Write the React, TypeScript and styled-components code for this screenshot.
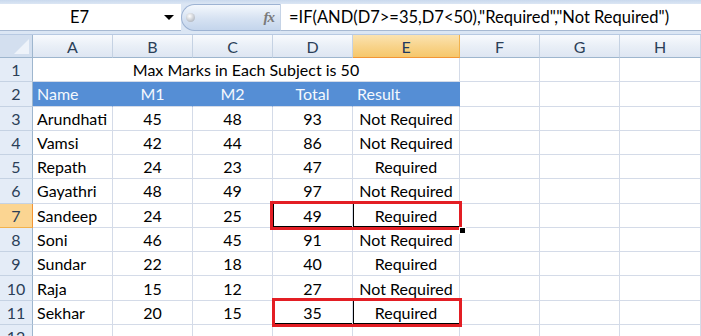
import React from "react";
import styled, { createGlobalStyle } from "styled-components";

const GlobalStyle = createGlobalStyle`
  html, body {
    margin: 0;
    padding: 0;
    background: #fff;
  }
  body {
    font-family: Lato, "Liberation Sans", sans-serif;
  }
`;

const students = [
  { name: "Arundhati", m1: 45, m2: 48 },
  { name: "Vamsi", m1: 42, m2: 44 },
  { name: "Repath", m1: 24, m2: 23 },
  { name: "Gayathri", m1: 48, m2: 49 },
  { name: "Sandeep", m1: 24, m2: 25 },
  { name: "Soni", m1: 46, m2: 45 },
  { name: "Sundar", m1: 22, m2: 18 },
  { name: "Raja", m1: 15, m2: 12 },
  { name: "Sekhar", m1: 20, m2: 15 },
];

const letters = ["A", "B", "C", "D", "E", "F", "G", "H"];

const App: React.FC = () => {
  return (
    <Window>
      <GlobalStyle />
      <FormulaBar>
        <NameBox>
          <span>E7</span>
          <DropArrow />
        </NameBox>
        <FxPill>
          <Knob />
          <Fx>fx</Fx>
        </FxPill>
        <FormulaInput>=IF(AND(D7&gt;=35,D7&lt;50),"Required","Not Required")</FormulaInput>
      </FormulaBar>

      <Sheet>
        <Corner />
        {letters.map((l) => (
          <ColHead key={l} $active={l === "E"}>{l}</ColHead>
        ))}

        <RowHead>1</RowHead>
        <Cell $span={5} $align="center">Max Marks in Each Subject is 50</Cell>
        <Cell /><Cell /><Cell />

        <RowHead>2</RowHead>
        <BlueCell $align="left">Name</BlueCell>
        <BlueCell>M1</BlueCell>
        <BlueCell>M2</BlueCell>
        <BlueCell>Total</BlueCell>
        <BlueCell $align="left">Result</BlueCell>
        <Cell /><Cell /><Cell />

        {students.map((s, i) => {
          const total = s.m1 + s.m2;
          const result = total >= 35 && total < 50 ? "Required" : "Not Required";
          const row = i + 3;
          return (
            <React.Fragment key={s.name}>
              <RowHead $active={row === 7}>{row}</RowHead>
              <Cell $align="left">{s.name}</Cell>
              <Cell>{s.m1}</Cell>
              <Cell>{s.m2}</Cell>
              <Cell $boxed={row === 7 || row === 11}>{total}</Cell>
              <Cell $boxed={row === 7 || row === 11}>{result}</Cell>
              <Cell /><Cell /><Cell />
            </React.Fragment>
          );
        })}

        <RowHead>12</RowHead>
        <Cell /><Cell /><Cell /><Cell /><Cell /><Cell /><Cell /><Cell />

        <Highlight style={{ top: 166, left: 270, width: 192, height: 29 }} />
        <Highlight style={{ top: 263, left: 272, width: 190, height: 29 }} />
        <FillHandle />
      </Sheet>
    </Window>
  );
};

export default App;

const Window = styled.div`
  width: 701px;
  height: 336px;
  overflow: hidden;
  position: relative;
  background: #fff;
`;

const FormulaBar = styled.div`
  height: 35px;
  box-sizing: border-box;
  display: flex;
  align-items: flex-start;
  padding-top: 4px;
  background: linear-gradient(#c9d9ee 0, #dbe6f4 4px, #dbe6f4 100%);
  border-bottom: 1px solid #b7c9e2;
`;

const NameBox = styled.div`
  width: 181px;
  height: 27px;
  box-sizing: border-box;
  background: #fff;
  border-bottom: 1px solid #a7b9d2;
  display: flex;
  align-items: center;
  position: relative;
  font-size: 16.5px;
  color: #000;
  span {
    flex: 1;
    text-align: center;
    padding-right: 22px;
  }
`;

const DropArrow = styled.div`
  position: absolute;
  right: 7px;
  top: 11px;
  width: 0;
  height: 0;
  border-left: 5px solid transparent;
  border-right: 5px solid transparent;
  border-top: 5px solid #000;
`;

const FxPill = styled.div`
  width: 99px;
  height: 27px;
  box-sizing: border-box;
  border: 1px solid #9db3d3;
  border-right: none;
  border-radius: 14px 0 0 14px;
  background: linear-gradient(#f4f8fd, #d6e2f2 55%, #c4d5ec);
  display: flex;
  align-items: center;
  justify-content: space-between;
  padding: 0 6px 0 4px;
`;

const Knob = styled.div`
  width: 9px;
  height: 9px;
  border-radius: 50%;
  background: radial-gradient(circle at 40% 35%, #ffffff, #b9bec6 70%, #9aa2ad);
`;

const Fx = styled.span`
  font-family: "Liberation Serif", serif;
  font-style: italic;
  font-weight: bold;
  font-size: 15px;
  color: #7a7a7a;
  letter-spacing: -1px;
`;

const FormulaInput = styled.div`
  flex: 1;
  height: 27px;
  box-sizing: border-box;
  background: #fff;
  border-left: 1px solid #c5d3e6;
  border-bottom: 1px solid #a7b9d2;
  padding-left: 8px;
  font-size: 16.5px;
  line-height: 26px;
  color: #000;
  white-space: nowrap;
`;

const Sheet = styled.div`
  position: relative;
  display: grid;
  grid-template-columns: 33px 80px 80px 80px 80px 107px 80px 80px 81px;
  grid-template-rows: 23px repeat(12, 24.27px);
  font-size: 16px;
  color: #000;
`;

const Corner = styled.div`
  box-sizing: border-box;
  background: #d3dfef;
  border-right: 1px solid #9eb6ce;
  border-bottom: 1px solid #9eb6ce;
  position: relative;
  &::after {
    content: "";
    position: absolute;
    right: 3px;
    bottom: 3px;
    width: 0;
    height: 0;
    border-left: 15px solid transparent;
    border-bottom: 15px solid #eef3fa;
  }
`;

const ColHead = styled.div<{ $active?: boolean }>`
  box-sizing: border-box;
  display: flex;
  align-items: center;
  justify-content: center;
  font-size: 16px;
  color: ${(p) => (p.$active ? "#1f3a5f" : "#2b3f58")};
  background: ${(p) =>
    p.$active
      ? "linear-gradient(#fbe3b1, #f8d48c 50%, #f6c76b)"
      : "linear-gradient(#f8fafd, #e9eff7 50%, #dee6f2)"};
  border-right: 1px solid ${(p) => (p.$active ? "#f2b24d" : "#c5d2e3")};
  border-bottom: 1px solid ${(p) => (p.$active ? "#f29536" : "#9eb6ce")};
`;

const RowHead = styled.div<{ $active?: boolean }>`
  box-sizing: border-box;
  display: flex;
  align-items: center;
  justify-content: center;
  font-size: 16px;
  color: #2b3f58;
  background: ${(p) => (p.$active ? "#fbd592" : "#e4ecf7")};
  border-right: 1px solid ${(p) => (p.$active ? "#f29536" : "#9eb6ce")};
  border-bottom: 1px solid ${(p) => (p.$active ? "#f2b24d" : "#c5d2e3")};
`;

const Cell = styled.div<{ $align?: "left" | "center"; $span?: number; $boxed?: boolean }>`
  box-sizing: border-box;
  display: flex;
  align-items: center;
  justify-content: ${(p) => (p.$align === "left" ? "flex-start" : "center")};
  padding: 0 4px;
  white-space: nowrap;
  grid-column: ${(p) => (p.$span ? `span ${p.$span}` : "auto")};
  border-right: 1px solid #d4dbe8;
  border-bottom: 1px solid #d4dbe8;
  ${(p) => (p.$boxed ? "box-shadow: inset 1px -1px 0 #000;" : "")}
`;

const BlueCell = styled(Cell)`
  background: #558ed5;
  color: #f4f8fd;
  border-right-color: #558ed5;
  border-bottom-color: #d4dbe8;
`;

const Highlight = styled.div`
  position: absolute;
  box-sizing: border-box;
  border: 3px solid #e31e24;
  pointer-events: none;
`;

const FillHandle = styled.div`
  position: absolute;
  top: 192px;
  left: 459px;
  width: 5px;
  height: 5px;
  background: #000;
  border: 1px solid #fff;
`;
